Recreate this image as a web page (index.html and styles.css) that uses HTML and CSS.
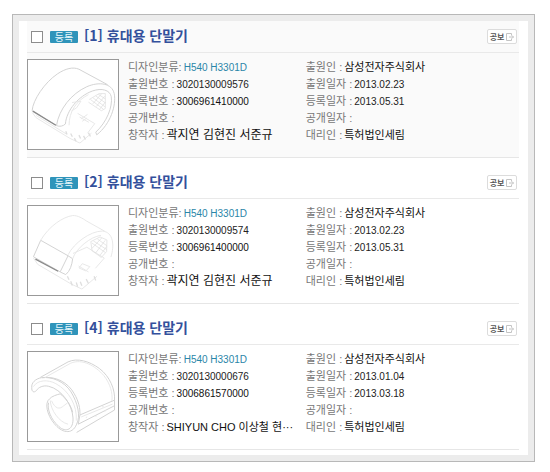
FILE: index.html
```html
<!DOCTYPE html>
<html lang="ko">
<head>
    <meta charset="utf-8">
    <meta name="viewport" content="width=device-width, initial-scale=1">
    <link rel="stylesheet" href="styles.css">
    <title>휴대용 단말기</title>
</head>
<body>
    <main class="panel">
        <div class="list">
            <article class="item shaded">
                <header class="item-head">
                    <input type="checkbox" class="check" id="item1">
                    <span class="badge">등록</span>
                    <h2 class="title"><label for="item1">[1] 휴대용 단말기</label></h2>
                    <button type="button" class="doc">공보
                        <svg class="doc-icon" viewBox="0 0 8 8"><path d="M5.500 2.500V.5h-5v7h5v-2M3 4h4.500M6 2.500L7.500 4 6 5.500" /></svg>
                    </button>
                </header>
                <div class="item-body">
                    <svg class="thumb" viewBox="25 28 270 270">
                        <path class="line" d="M36 182C38 150 74 96 113 70C137 54 160 48 178 56M178 56L265 103M36 182L110 227M110 227C117 178 155 130 202 109C239 93 278 98 285 130C292 165 274 222 232 255" />
                        <path class="line" d="M110 227C119 231 130 229 137 222C140 181 177 137 219 122C247 112 272 119 276 139C281 170 262 217 229 247L232 255" />
                        <path class="faint" d="M148 226C148 184 171 151 207 133M36 187L48 203L151 266L181 280L216 250M157 157L184 153L171 173L155 183M174 190L226 221L204 250M184 207L204 193M180 201L208 217M188 214L202 204M48 196L139 252" />
                        <path class="hatch" d="M209 148L239 130L258 130L258 175L246 182L207 156M213 148L252 177M221 143L257 170M229 137L258 158M237 132L258 146M220 161L247 130M231 169L256 138M241 177L258 156" />
                        <path class="dash" d="M138 244L142 254M153 251L158 261M164 265L169 274M178 256L183 266M192 258L198 269M207 249L213 260" />
                        <path class="edge" d="M38 183L108 226" />
                    </svg>
                    <div class="info">
                        <dl class="fields">
                            <div class="row"><dt>디자인분류:</dt><dd><a href="#" class="code">H540 H3301D</a></dd></div>
                            <div class="row"><dt>출원번호 :</dt><dd>3020130009576</dd></div>
                            <div class="row"><dt>등록번호 :</dt><dd class="strong">3006961410000</dd></div>
                            <div class="row"><dt>공개번호 :</dt><dd></dd></div>
                            <div class="row"><dt>창작자 :</dt><dd class="name">곽지연 김현진 서준규</dd></div>
                        </dl>
                        <dl class="fields">
                            <div class="row"><dt>출원인 :</dt><dd class="company">삼성전자주식회사</dd></div>
                            <div class="row"><dt>출원일자 :</dt><dd>2013.02.23</dd></div>
                            <div class="row"><dt>등록일자 :</dt><dd>2013.05.31</dd></div>
                            <div class="row"><dt>공개일자 :</dt><dd></dd></div>
                            <div class="row"><dt>대리인 :</dt><dd class="company">특허법인세림</dd></div>
                        </dl>
                    </div>
                </div>
            </article>
            <article class="item">
                <header class="item-head">
                    <input type="checkbox" class="check" id="item2">
                    <span class="badge">등록</span>
                    <h2 class="title"><label for="item2">[2] 휴대용 단말기</label></h2>
                    <button type="button" class="doc">공보
                        <svg class="doc-icon" viewBox="0 0 8 8"><path d="M5.500 2.500V.5h-5v7h5v-2M3 4h4.500M6 2.500L7.500 4 6 5.500" /></svg>
                    </button>
                </header>
                <div class="item-body">
                    <svg class="thumb" viewBox="25 22 270 270">
                        <path class="line" d="M62 126L145 173L121 222L40 176ZM145 173L159 182C157 200 151 220 138 230L121 222" />
                        <path class="faint" d="M62 126C88 82 130 55 159 51C174 50 190 60 200 67L257 99M145 170C163 134 213 98 249 98C283 101 286 142 275 177M159 182C169 151 213 115 245 111M40 180L53 199L155 259L187 274L233 235M160 166L202 147L255 180L228 211M177 204L207 222M188 197L178 210L199 219L211 206Z" />
                        <path class="hatch" d="M214 130L242 116L263 125L262 160L246 178L218 158ZM217 134L258 163M222 128L262 154M234 122L262 142M217 151L247 119M229 164L258 126M241 173L262 145" />
                        <path class="dash" d="M143 235L148 246M153 250L158 263M170 254L174 267M182 252L187 264M200 244L207 257M224 235L229 248" />
                        <path class="edge" d="M46 183L115 220" />
                    </svg>
                    <div class="info">
                        <dl class="fields">
                            <div class="row"><dt>디자인분류:</dt><dd><a href="#" class="code">H540 H3301D</a></dd></div>
                            <div class="row"><dt>출원번호 :</dt><dd>3020130009574</dd></div>
                            <div class="row"><dt>등록번호 :</dt><dd class="strong">3006961400000</dd></div>
                            <div class="row"><dt>공개번호 :</dt><dd></dd></div>
                            <div class="row"><dt>창작자 :</dt><dd class="name">곽지연 김현진 서준규</dd></div>
                        </dl>
                        <dl class="fields">
                            <div class="row"><dt>출원인 :</dt><dd class="company">삼성전자주식회사</dd></div>
                            <div class="row"><dt>출원일자 :</dt><dd>2013.02.23</dd></div>
                            <div class="row"><dt>등록일자 :</dt><dd>2013.05.31</dd></div>
                            <div class="row"><dt>공개일자 :</dt><dd></dd></div>
                            <div class="row"><dt>대리인 :</dt><dd class="company">특허법인세림</dd></div>
                        </dl>
                    </div>
                </div>
            </article>
            <article class="item">
                <header class="item-head">
                    <input type="checkbox" class="check" id="item4">
                    <span class="badge">등록</span>
                    <h2 class="title"><label for="item4">[4] 휴대용 단말기</label></h2>
                    <button type="button" class="doc">공보
                        <svg class="doc-icon" viewBox="0 0 8 8"><path d="M5.500 2.500V.5h-5v7h5v-2M3 4h4.500M6 2.500L7.500 4 6 5.500" /></svg>
                    </button>
                </header>
                <div class="item-body">
                    <svg class="thumb" viewBox="25 30 270 270">
                        <path class="line" d="M35 138C33 124 46 111 64 108C94 104 133 118 154 151C174 184 184 224 171 249C157 284 124 274 103 247C81 221 73 184 89 172C96 164 110 160 121 157M35 138C34 150 41 155 49 147C55 137 70 130 86 134C126 143 158 191 160 230C162 265 139 276 117 256C92 234 81 202 86 184M121 157C140 171 154 193 159 213" />
                        <path class="line" d="M61 107L145 60C173 47 210 58 240 80C273 105 288 145 286 176L286 206L171 274M67 108C107 102 146 123 164 157C177 179 182 201 181 221L286 176M181 221L176 249L286 193" />
                        <path class="faint" d="M40 135C53 114 84 113 108 126C148 148 173 192 170 238M74 108L153 64C188 49 228 72 254 102C273 127 281 154 278 179M95 178C106 203 119 205 132 193L144 184M91 177C92 206 118 243 145 249M185 227L280 188M199 229l4-2M228 225l5-2M256 210l4-2M248 197l5-2" />
                    </svg>
                    <div class="info">
                        <dl class="fields">
                            <div class="row"><dt>디자인분류:</dt><dd><a href="#" class="code">H540 H3301D</a></dd></div>
                            <div class="row"><dt>출원번호 :</dt><dd>3020130000676</dd></div>
                            <div class="row"><dt>등록번호 :</dt><dd class="strong">3006861570000</dd></div>
                            <div class="row"><dt>공개번호 :</dt><dd></dd></div>
                            <div class="row"><dt>창작자 :</dt><dd class="company">SHIYUN CHO 이상철 현···</dd></div>
                        </dl>
                        <dl class="fields">
                            <div class="row"><dt>출원인 :</dt><dd class="company">삼성전자주식회사</dd></div>
                            <div class="row"><dt>출원일자 :</dt><dd>2013.01.04</dd></div>
                            <div class="row"><dt>등록일자 :</dt><dd>2013.03.18</dd></div>
                            <div class="row"><dt>공개일자 :</dt><dd></dd></div>
                            <div class="row"><dt>대리인 :</dt><dd class="company">특허법인세림</dd></div>
                        </dl>
                    </div>
                </div>
            </article>
        </div>
    </main>
</body>
</html>
```
FILE: styles.css
```css
* { margin: 0; padding: 0; box-sizing: border-box; }
body { background: #fff; padding: 14px 15px 8px 12px; font-family: "Liberation Sans", "Noto Sans CJK KR", sans-serif; font-size: 10px; color: #222; }
.panel { border: 1px solid #b8b8b8; padding: 6px; background: #ececec; }
.list { display: flex; flex-direction: column; gap: 9px; background: #fff; padding: 0 9px 5px 8px; }
.item { border-bottom: 1px solid #e6e6e6; }
.shaded { background: #fafafa; }
.item-head { display: flex; align-items: center; height: 32px; padding: 0 2px 0 4px; border-bottom: 1px solid #e9e9e9; }
.check { appearance: none; width: 12px; height: 12px; border: 1px solid #8c8c8c; background: #fff; }
.check:checked { background: #2f94ba; }
.badge { margin-left: 7px; width: 28px; height: 12px; border-radius: 1px; background: #2f94ba; color: #e8f6fb; font-family: "Noto Sans CJK KR", sans-serif; font-size: 10px; line-height: 12px; text-align: center; }
.title { flex: 1; margin-left: 6px; padding-bottom: 3px; font-family: "Noto Sans CJK KR", sans-serif; font-size: 14px; font-weight: 700; line-height: 18px; color: #33509c; }
.doc { display: flex; align-items: center; justify-content: center; gap: 2px; width: 30px; height: 15px; border: 1px solid #dcdcdc; border-radius: 2px; background: #fff; color: #555; font-family: "Noto Sans CJK KR", sans-serif; font-size: 8px; font-weight: 700; line-height: 12px; white-space: nowrap; }
.doc-icon { width: 8px; height: 8px; flex: none; fill: none; stroke: #c4c4c4; }
.item-body { display: flex; gap: 9px; padding: 6px 0 7px; }
.thumb { flex: none; width: 92px; height: 91px; border: 1px solid #999; background: #fff; fill: none; stroke-width: 3; }
.line { stroke: #d2d2d2; }
.faint { stroke: #e8e8e8; }
.hatch { stroke: #dadada; stroke-width: 2; }
.dash { stroke: #dedede; stroke-width: 4; }
.edge { stroke: #8a8a8a; stroke-width: 4; }
.info { flex: 1; display: grid; grid-template-columns: minmax(0, 5fr) minmax(0, 6fr); }
.row { display: flex; align-items: baseline; gap: 2px; height: 17px; line-height: 17px; white-space: nowrap; }
dt { font-size: 11px; color: #777; }
.company { font-size: 11px; }
.name { font-size: 12px; }
.company, .name, .strong { color: #111; }
.code { color: #2a86a8; text-decoration: none; }
```
